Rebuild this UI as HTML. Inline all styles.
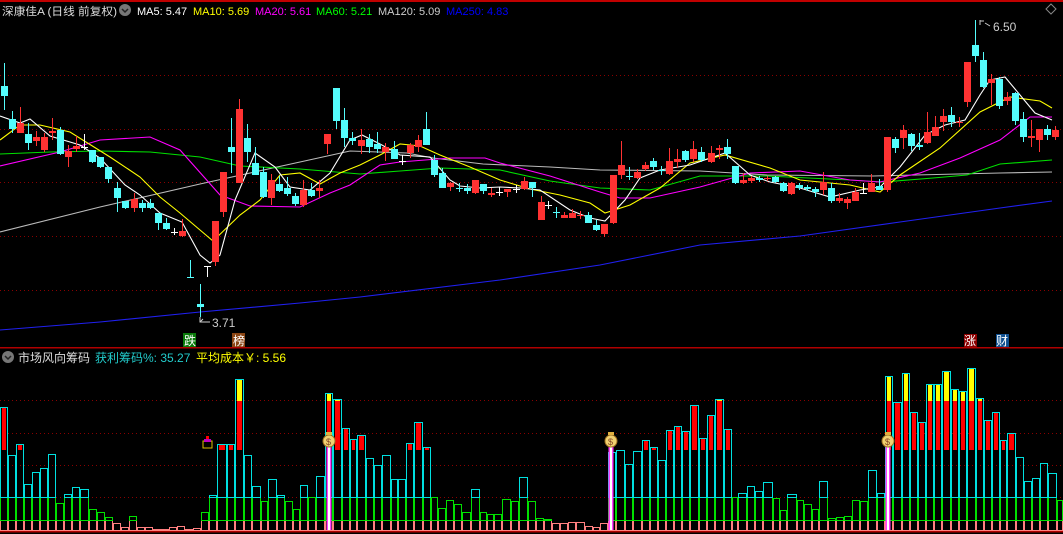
<!DOCTYPE html>
<html><head><meta charset="utf-8">
<style>
html,body{margin:0;padding:0;background:#000;width:1063px;height:534px;overflow:hidden}
svg{position:absolute;left:0;top:0}
.t{font-family:"Liberation Sans","Noto Sans CJK SC",sans-serif;font-size:12px}
.h{font-family:"Liberation Sans","Noto Sans CJK SC",sans-serif;font-size:11px}
</style></head><body>
<svg id="s" width="1063" height="534" viewBox="0 0 1063 534" xmlns="http://www.w3.org/2000/svg">
<rect width="1063" height="534" fill="#000"/>
<rect x="0" y="0" width="1063" height="2" fill="#c00000"/>
<g stroke="#8a0000" stroke-width="1" stroke-dasharray="1,3">
<line x1="0" y1="75.5" x2="1063" y2="75.5"/><line x1="0" y1="129.5" x2="1063" y2="129.5"/>
<line x1="0" y1="182.5" x2="1063" y2="182.5"/><line x1="0" y1="236.5" x2="1063" y2="236.5"/>
<line x1="0" y1="290.5" x2="1063" y2="290.5"/>
<line x1="0" y1="400.5" x2="1063" y2="400.5"/><line x1="0" y1="433.5" x2="1063" y2="433.5"/>
<line x1="0" y1="465.5" x2="1063" y2="465.5"/><line x1="0" y1="497.5" x2="1063" y2="497.5"/>
</g>
<rect x="0" y="347" width="1063" height="1.5" fill="#b00000"/>
<rect x="0" y="531" width="1063" height="1.5" fill="#b00000"/>
<g id="ma" fill="none" stroke-width="1.1"></g>
<g id="cd"></g>
<g id="vb"></g>
<text x="2" y="15" class="h" fill="#ddd" textLength="115" lengthAdjust="spacingAndGlyphs">深康佳A (日线 前复权)</text>
<circle cx="125" cy="10" r="6" fill="#777"/><path d="M122,9 L125,12 L128,9" stroke="#222" stroke-width="1.5" fill="none"/>
<text x="137" y="15" class="h" fill="#fff">MA5: 5.47</text>
<text x="193" y="15" class="h" fill="#ff0">MA10: 5.69</text>
<text x="255" y="15" class="h" fill="#f0f">MA20: 5.61</text>
<text x="316" y="15" class="h" fill="#0f0">MA60: 5.21</text>
<text x="378" y="15" class="h" fill="#ccc">MA120: 5.09</text>
<text x="446" y="15" class="h" fill="#00f">MA250: 4.83</text>
<path d="M1051,4 L1056,9 L1051,14 L1046,9Z" stroke="#888" fill="none"/>
<text x="993" y="31" class="t" fill="#ccc">6.50</text>
<path d="M980,20 L980,25 M980,21 L984,21 M985,23 L990,26" stroke="#ccc" fill="none"/>
<text x="212" y="327" class="t" fill="#ccc">3.71</text>
<path d="M200,317 L200,322 L210,322 M200,322 L203,319" stroke="#ccc" fill="none"/>
<rect x="183" y="333" width="13" height="14" fill="#0a7a0a"/><text x="184" y="345" class="t" fill="#fff">跌</text>
<rect x="232" y="333" width="13" height="14" fill="#8b4513"/><text x="233" y="345" class="t" fill="#fff">榜</text>
<rect x="964" y="334" width="13" height="13" fill="#8b0000"/><text x="964" y="345" class="t" fill="#fff">涨</text>
<rect x="996" y="334" width="13" height="13" fill="#0f4f8f"/><text x="996" y="345" class="t" fill="#fff">财</text>
<circle cx="8" cy="357" r="6" fill="#777"/><path d="M5,356 L8,359 L11,356" stroke="#222" stroke-width="1.5" fill="none"/>
<text x="18" y="362" class="t" fill="#ddd">市场风向筹码</text>
<text x="95" y="362" class="t" fill="#2cc">获利筹码%: 35.27</text>
<text x="196" y="362" class="t" fill="#ff0">平均成本￥: 5.56</text>
<g id="ic"></g>
</svg>
<script>
var NS="http://www.w3.org/2000/svg";
function el(p,n,a){var e=document.createElementNS(NS,n);for(var k in a)e.setAttribute(k,a[k]);p.appendChild(e);return e;}
var ma=document.getElementById('ma');
var lines={
"#2020f0":[[0,330],[100,322],[200,312],[300,303],[360,297],[500,280],[600,265],[700,245],[800,236],[900,222],[1000,208],[1052,201]],
"#bbbbbb":[[0,232],[100,207],[200,184],[300,162],[350,151],[407,153],[433,158],[483,164],[550,167],[600,170],[700,171],[767,175],[873,176],[1000,173],[1052,172]],
"#00e000":[[0,154],[50,152],[100,151],[150,152],[200,157],[240,166],[300,169],[360,174],[400,171],[440,168],[500,170],[550,181],[600,188],[650,190],[700,176],[767,176],[850,180],[883,182],[933,178],[967,175],[1000,164],[1052,160]],
"#ff00ff":[[0,166],[60,152],[100,140],[150,137],[180,150],[220,195],[250,206],[300,207],[330,193],[350,185],[380,165],[400,162],[450,158],[485,158],[500,163],[550,176],[600,192],[620,198],[650,198],[700,187],[750,173],[800,171],[850,180],[880,182],[920,173],[960,158],[1000,140],[1030,117],[1052,117]],
"#ffff00":[[0,140],[20,125],[40,125],[70,132],[110,157],[140,177],[160,197],[180,213],[200,230],[213,241],[240,215],[260,200],[280,175],[300,173],[320,184],[340,173],[360,165],[380,155],[400,144],[420,146],[440,155],[470,167],[500,180],[530,189],[560,195],[590,203],[605,213],[630,205],[660,188],[690,163],[725,155],[770,168],[800,180],[850,185],[880,192],[900,175],[940,148],[980,112],[1010,97],[1040,101],[1052,108]],
"#ffffff":[[0,116],[20,123],[30,119],[50,136],[80,145],[100,158],[125,185],[140,195],[160,213],[182,222],[200,255],[210,263],[220,255],[235,200],[255,153],[275,167],[290,187],[310,190],[330,173],[350,140],[362,135],[380,144],[400,155],[430,157],[450,180],[460,186],[480,188],[500,187],[520,188],[540,190],[570,210],[590,218],[605,221],[625,200],[640,178],[660,170],[690,165],[725,153],[750,175],[770,182],[800,188],[830,197],[860,190],[880,187],[900,167],[925,135],[945,125],[965,120],[980,95],[990,80],[1005,77],[1020,95],[1035,113],[1052,120]]};
for(var c in lines){el(ma,'polyline',{points:lines[c].map(function(p){return p.join(',')}).join(' '),stroke:c});}
var C=[[4,86,96,63,110,'c'],[12,119,129,111,133,'c'],[20,123,133,107,133,'r'],[28,134,143,123,150,'c'],[36,137,141,131,146,'r'],[44,137,150,133,152,'r'],[52,131,133,118,140,'r'],[60,130,154,127,155,'c'],[68,151,157,145,167,'r'],[76,146,149,136,152,'r'],[84,147,148,134,150,'w'],[92,150,162,150,163,'c'],[100,157,167,157,168,'c'],[108,167,179,167,183,'c'],[117,188,198,182,212,'c'],[125,201,208,201,209,'c'],[134,199,208,193,212,'r'],[142,203,208,200,212,'c'],[150,203,208,199,209,'c'],[158,213,223,213,230,'c'],[166,223,229,218,230,'c'],[174,232,233,228,235,'w'],[182,231,236,219,237,'r'],[190,277,278,260,278,'c'],[200,304,307,284,317,'c'],[207,266,267,266,277,'w'],[215,221,262,221,266,'r'],[223,172,212,172,217,'r'],[231,147,152,118,173,'c'],[239,109,183,99,183,'r'],[247,138,152,124,162,'c'],[255,163,175,147,175,'c'],[263,172,197,167,198,'c'],[271,180,198,174,205,'r'],[279,184,191,176,192,'c'],[287,188,194,177,196,'c'],[295,196,204,193,206,'c'],[303,190,205,180,207,'r'],[311,190,196,183,197,'c'],[319,188,191,180,198,'r'],[327,134,144,134,154,'r'],[336,88,121,88,129,'c'],[344,120,138,108,147,'c'],[352,138,141,132,145,'c'],[361,140,146,129,154,'r'],[369,139,147,134,153,'c'],[377,144,149,132,153,'c'],[385,147,152,143,161,'r'],[394,149,159,141,159,'c'],[402,161,162,155,165,'w'],[410,145,153,143,158,'r'],[418,140,147,135,152,'r'],[426,129,145,112,145,'c'],[434,160,175,155,177,'c'],[442,173,188,168,188,'c'],[450,183,187,182,191,'r'],[459,188,189,183,192,'c'],[467,188,191,184,194,'c'],[475,180,193,180,194,'r'],[483,184,191,184,194,'c'],[491,193,195,188,197,'r'],[499,192,193,187,196,'w'],[507,189,192,189,197,'r'],[516,189,190,185,193,'w'],[524,181,189,177,190,'r'],[532,182,188,182,197,'c'],[541,202,220,196,220,'r'],[548,205,206,201,209,'w'],[556,212,213,207,218,'c'],[564,215,218,212,218,'r'],[572,213,218,209,218,'r'],[580,215,216,211,219,'r'],[588,215,223,212,223,'c'],[596,225,230,220,231,'c'],[604,224,234,224,237,'r'],[613,175,223,175,224,'r'],[621,165,175,141,179,'r'],[629,176,177,167,180,'c'],[637,172,178,169,179,'r'],[645,165,169,162,171,'r'],[653,161,167,158,170,'c'],[661,170,171,166,175,'c'],[669,161,174,148,175,'r'],[677,159,162,149,168,'r'],[685,151,160,150,162,'c'],[693,149,159,141,162,'r'],[701,152,160,147,162,'c'],[711,153,162,146,163,'r'],[719,148,150,145,159,'r'],[727,147,154,139,159,'c'],[735,166,183,166,184,'c'],[743,180,183,173,184,'r'],[751,178,181,176,183,'r'],[759,178,180,176,182,'c'],[767,178,179,176,181,'r'],[775,177,182,176,183,'c'],[783,183,191,182,192,'c'],[791,183,194,182,195,'r'],[799,185,188,183,190,'c'],[807,187,189,185,191,'c'],[815,189,192,187,197,'c'],[823,182,190,172,195,'r'],[831,188,201,183,203,'c'],[839,198,201,193,203,'r'],[847,199,203,197,209,'r'],[855,192,201,188,201,'r'],[863,193,194,183,194,'w'],[871,183,192,174,192,'r'],[879,186,190,179,190,'c'],[887,137,190,137,192,'r'],[895,139,148,137,153,'c'],[903,130,138,125,149,'r'],[911,134,146,133,151,'c'],[919,145,147,133,150,'c'],[927,132,143,112,144,'r'],[935,127,136,116,136,'r'],[943,116,122,109,131,'r'],[951,115,122,107,127,'c'],[959,122,123,117,127,'r'],[967,62,102,62,107,'r'],[975,45,56,20,62,'c'],[983,60,87,52,88,'c'],[991,79,83,74,105,'r'],[999,79,106,77,109,'c'],[1007,97,101,92,105,'r'],[1015,93,121,92,125,'c'],[1023,119,137,112,142,'c'],[1031,136,138,120,147,'r'],[1039,129,140,129,152,'r'],[1047,129,135,125,140,'c'],[1055,130,137,126,140,'r']];
var cd=document.getElementById('cd');
var col={c:'#54fcfc',r:'#ff3232',w:'#ffffff'};
C.forEach(function(k){var x=k[0],f=col[k[5]];
el(cd,'line',{x1:x+0.5,y1:k[3],x2:x+0.5,y2:k[4],stroke:f,'stroke-width':1});
var h=Math.max(1,k[2]-k[1]);el(cd,'rect',{x:x-3,y:k[1],width:7,height:h,fill:f});});
var B=[[0,407],[8,455],[16,444],[24,484],[32,472],[40,468],[48,454],[56,503],[64,494],[72,487],[80,489],[89,509],[97,512],[105,517],[113,523],[121,527],[129,516],[137,527],[145,527],[153,529],[161,529],[169,527],[177,526],[185,529],[193,528],[201,512],[209,495],[217,444],[227,444],[235,379],[244,455],[252,486],[261,501],[268,479],[277,495],[285,501],[293,509],[300,485],[308,497],[316,476],[325,393],[333,399],[342,428],[350,439],[357,435],[366,458],[374,465],[382,455],[391,479],[398,479],[406,443],[414,422],[423,447],[431,497],[438,508],[446,500],[454,504],[462,512],[471,489],[480,512],[487,514],[494,514],[502,499],[511,501],[519,477],[528,501],[536,518],[544,519],[552,523],[560,523],[568,522],[576,522],[585,526],[593,527],[600,523],[608,452],[616,450],[625,464],[633,451],[642,440],[650,447],[658,460],[666,430],[674,426],[682,431],[690,405],[699,438],[707,415],[715,399],[724,429],[732,497],[738,493],[747,486],[755,491],[763,482],[773,498],[780,510],[787,494],[797,500],[804,504],[812,509],[819,481],[828,518],[836,517],[844,516],[852,500],[860,501],[868,470],[877,493],[885,376],[893,402],[902,373],[910,412],[918,422],[926,384],[934,384],[942,371],[951,389],[959,391],[967,368],[976,398],[984,420],[992,412],[1000,440],[1007,433],[1016,457],[1024,481],[1032,478],[1040,463],[1048,473],[1057,500],[1063,0]];
var vb=document.getElementById('vb');
for(var i=0;i<B.length-1;i++){var x0=B[i][0],x1=B[i+1][0],t=B[i][1],w=x1-x0;
 function seg(a,b,s){if(b-a<0.5)return;el(vb,'rect',{x:x0+0.5,y:a+0.5,width:w-1,height:b-a,fill:'none',stroke:s,'stroke-width':1});}
 seg(Math.max(t,520),530,'#ff8080');
 if(t<520)seg(Math.max(t,497),520,'#00e000');
 if(t<497){seg(t,497,'#00e0e0');}
 if(t<450){el(vb,'rect',{x:x0+2,y:Math.max(t+1,401),width:w-4,height:450-Math.max(t+1,401),fill:'#ff0000'});}
 if(t<401){el(vb,'rect',{x:x0+2,y:t+1,width:w-4,height:401-t-1,fill:'#ffff00'});}
}
var ic=document.getElementById('ic');
[329,611,888].forEach(function(x){
 el(ic,'rect',{x:x-2.5,y:447,width:5,height:83,fill:'#ff40ff'});
 el(ic,'rect',{x:x-1,y:447,width:2,height:83,fill:'#fff'});
 el(ic,'circle',{cx:x,cy:441,r:6,fill:'#f0d070',stroke:'#a07020'});
 el(ic,'rect',{x:x-3,y:432,width:6,height:3,fill:'#e0b040'});
 el(ic,'text',{x:x-3,y:445,fill:'#804020','font-size':'9','font-family':'Liberation Sans,sans-serif'}).textContent='$';
});
el(ic,'rect',{x:203,y:441,width:9,height:7,fill:'none',stroke:'#e0c000'});
el(ic,'rect',{x:204,y:439,width:7,height:3,fill:'#c000c0'});
el(ic,'rect',{x:206,y:436,width:3,height:3,fill:'#ff0000'});
</script>
</body></html>
